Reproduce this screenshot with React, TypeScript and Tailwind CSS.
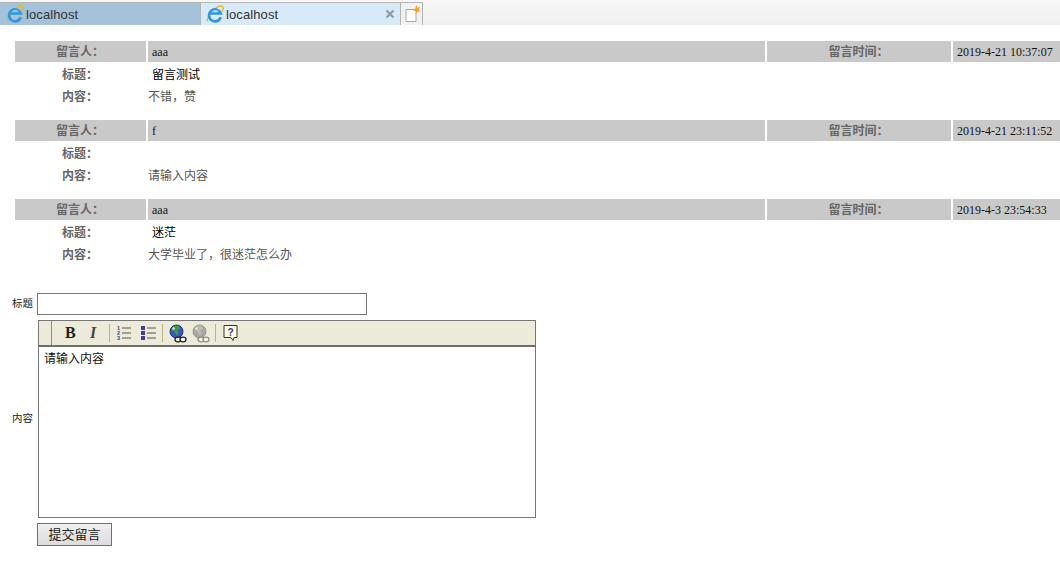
const serif = "font-['Liberation_Serif','Noto_Sans_CJK_SC',serif]";

function IeIcon() {
  return (
    <svg width="18" height="18" viewBox="0 0 18 18" className="shrink-0">
      <path d="M1.800 16.300C.3 14.800 2.500 10.300 6.300 6.300S14 .2 16.300 1.300c1.500 .8 1.200 3-.3 5.200" fill="none" stroke="#eeb51c" strokeWidth="1.400" />
      <path d="M14.800 12.300A6 6 0 1 1 14.800 8.500H5" fill="none" stroke="#2f97da" strokeWidth="2.700" />
      <path d="M6 7.500a4 4 0 0 1 6.500-1" fill="none" stroke="#8fd2f5" strokeWidth="1" />
    </svg>
  );
}

function Tab({ active }: { active?: boolean }) {
  return (
    <div className={`flex h-[22px] items-center border-r border-[#b5b5b5] pr-[5px] text-[13px] tracking-[0.1px] text-[#333] font-['Liberation_Sans',sans-serif] ${active ? "w-[200px] bg-[#d8eafa] pl-[5px]" : "w-[201px] bg-[#a4c2da] pl-[6px]"}`}>
      <IeIcon />
      <span className="ml-[2px] flex-1 pt-[2px]">localhost</span>
      {active && (
        <svg width="10" height="10" viewBox="0 0 10 10">
          <path d="M1.500 1.500l7 7M8.500 1.500l-7 7" stroke="#8a9aa6" strokeWidth="2" />
        </svg>
      )}
    </div>
  );
}

function Message({ user, time, title, body }: { user: string; time: string; title: string; body: string }) {
  const head = "flex h-[21px] items-center bg-[#c9c9c9]";
  const label = "font-bold text-[#666] text-[12px]";
  return (
    <div className={`mb-[13px] text-[12px] ${serif}`}>
      <div className="flex gap-[2px] pl-[15px]">
        <div className={`${head} ${label} w-[131px] justify-center pr-[1px]`}>留言人：</div>
        <div className={`${head} w-[617px] pl-[4px] text-[#111]`}>{user}</div>
        <div className={`${head} ${label} w-[184px] justify-center pr-[1px]`}>留言时间：</div>
        <div className={`${head} flex-1 pl-[4px] text-[#111]`}>{time}</div>
      </div>
      <div className="flex h-[24px] items-center pl-[15px] pt-[2px]">
        <div className={`${label} w-[130px] text-center`}>标题：</div>
        <div className="pl-[7px] text-[12px] text-black">{title}</div>
      </div>
      <div className="flex h-[21px] items-center pl-[15px]">
        <div className={`${label} w-[130px] text-center`}>内容：</div>
        <div className="pl-[3px] text-[12px] text-[#555]">{body}</div>
      </div>
    </div>
  );
}

const Sep = ({ className }: { className: string }) => <div className={`h-[18px] w-px bg-[#b7b48f] ${className}`} />;

function Globe({ off, className }: { off?: boolean; className: string }) {
  return (
    <svg width="18" height="19" viewBox="0 0 18 19" opacity={off ? 0.45 : 1} className={`${className} ${off ? "grayscale" : ""}`}>
      <circle cx="7.500" cy="7.500" r="6.500" fill="#3a55c5" stroke="#24306e" />
      <path d="M5 2l4-.5 2.500 3-3 2 1 3-2 2-2-4-3-1 1-3z" fill="#3f9e3f" />
      <circle cx="4.500" cy="4.500" r="1.300" fill="#cfe0ff" />
      <g fill="#fff" stroke="#222" strokeWidth="1.300">
        <ellipse cx="9" cy="15.500" rx="3" ry="2.300" />
        <ellipse cx="14" cy="15.500" rx="3" ry="2.300" />
      </g>
    </svg>
  );
}

export default function App() {
  return (
    <div className="h-[573px] w-[1060px] overflow-hidden bg-white">
      <div className="h-[25px] bg-gradient-to-b from-[#f7f7f7] to-[#efefef] pt-[2px]">
        <div className="flex h-[23px] w-[423px] border-t border-[#b5b5b5]">
          <Tab />
          <Tab active />
          <div className="flex h-[22px] w-[22px] items-center justify-center border-r border-[#b5b5b5] bg-[#f1f1f1]">
            <svg width="18" height="18" viewBox="0 0 18 18">
              <path d="M3 4.500h10v12H3z" fill="#fff" stroke="#a9a9a9" />
              <path d="M13.500 0l1 2.500 2.500-.5-1 2.500 1.500 2-2.500 0-1.500 2-1-2.500-2.500-.5 2-1.500z" fill="#f6a623" />
            </svg>
          </div>
        </div>
      </div>

      <div className="pt-[16px]">
        <Message user="aaa" time="2019-4-21 10:37:07" title="留言测试" body="不错，赞" />
        <Message user="f" time="2019-4-21 23:11:52" title="" body="请输入内容" />
        <Message user="aaa" time="2019-4-3 23:54:33" title="迷茫" body="大学毕业了，很迷茫怎么办" />
      </div>

      <div className={`pl-[12px] pt-[15px] ${serif}`}>
        <div className="flex items-center">
          <span className="w-[25px] text-[10.5px] text-[#222]">标题</span>
          <div className="h-[22px] w-[330px] border border-[#767676] bg-white" />
        </div>
        <div className="mt-[5px] flex items-center">
          <span className="w-[26px] text-[10.5px] text-[#222]">内容</span>
          <div className="h-[198px] w-[498px] border border-[#767676]">
            <div className="flex h-[26px] items-center border-b-2 border-[#6e6e6e] bg-[#ecebd9]">
              <div className="h-full w-[13px] border-r border-[#8f8e7c]" />
              <span className="ml-[13px] w-[12px] text-[16px] font-bold leading-none text-[#222]">B</span>
              <span className="ml-[13px] w-[8px] text-[16px] font-bold italic leading-none text-[#444]">I</span>
              <Sep className="ml-[11px]" />
              <svg width="18" height="16" viewBox="0 0 18 16" className="ml-[6px]">
                <text x="1" y="5" fontSize="5.500" fontWeight="bold" fill="#3d3d9e" fontFamily="Liberation Sans">1</text>
                <text x="1" y="10" fontSize="5.500" fontWeight="bold" fill="#3d3d9e" fontFamily="Liberation Sans">2</text>
                <text x="1" y="15" fontSize="5.500" fontWeight="bold" fill="#3d3d9e" fontFamily="Liberation Sans">3</text>
                <path d="M6 3h9M6 8h9M6 13h9" stroke="#555" />
              </svg>
              <svg width="18" height="16" viewBox="0 0 18 16" className="ml-[6px]">
                <path d="M1 1h4v4H1zM1 6h4v4H1zM1 11h4v4H1z" fill="#3d3d9e" />
                <path d="M7 3h9M7 8h9M7 13h9" stroke="#555" />
              </svg>
              <Sep className="ml-[4px]" />
              <Globe className="ml-[6px]" />
              <Globe off className="ml-[5px]" />
              <Sep className="ml-[5px]" />
              <svg width="18" height="19" viewBox="0 0 18 19" className="ml-[6px]">
                <path d="M2 1.500h13v12h-3l-1 3-2-3H2z" fill="#fffbe0" stroke="#333" />
                <text x="5.500" y="11.500" fontSize="10" fontWeight="bold" fill="#2b3a8f" fontFamily="Liberation Sans">?</text>
              </svg>
            </div>
            <div className="pl-[5px] pt-[3px] text-[12px] text-[#111]">请输入内容</div>
          </div>
        </div>
        <button className="ml-[25px] mt-[5px] block h-[23px] w-[75px] border border-[#707070] bg-gradient-to-b from-[#f0f0f0] to-[#dcdcdc] text-[13px] text-[#222] font-['Liberation_Sans','Noto_Sans_CJK_SC',sans-serif]">
          提交留言
        </button>
      </div>
    </div>
  );
}
